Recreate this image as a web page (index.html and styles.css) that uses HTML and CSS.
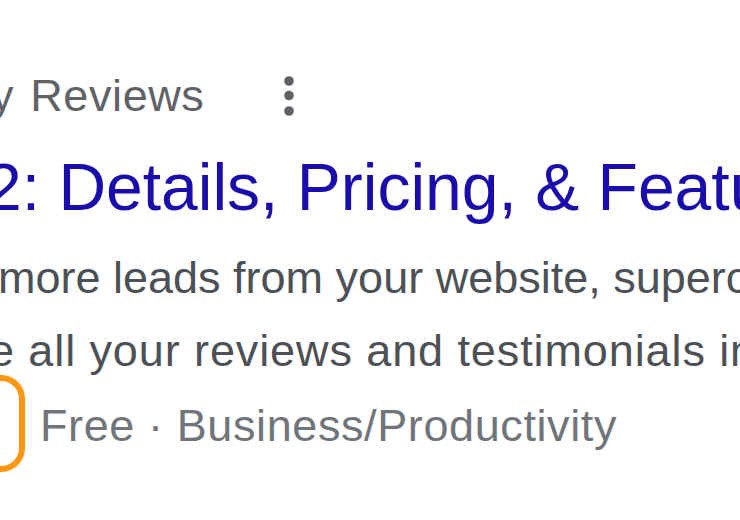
FILE: index.html
```html
<!DOCTYPE html>
<html lang="en">
<head>
<meta charset="utf-8">
<title>Search result</title>
<link rel="stylesheet" href="styles.css">
</head>
<body>
<div class="result">
  <div class="source">
    <span class="crumb"><span class="cut">y</span> Reviews</span>
    <svg class="kebab" width="12" height="42" viewBox="0 0 12 42" aria-hidden="true">
      <circle cx="6" cy="6" r="4.8" fill="#5f6368"/>
      <circle cx="6" cy="20.5" r="4.8" fill="#5f6368"/>
      <circle cx="6" cy="36" r="4.8" fill="#5f6368"/>
    </svg>
  </div>
  <h3 class="title">2: Details, Pricing, &amp; Features</h3>
  <div class="desc">
    <div class="line l1">more leads from your website, supercharge your sales</div>
    <div class="line l2">e all your reviews and testimonials in one place</div>
  </div>
  <div class="meta">
    <div class="mark"></div>
    <span class="meta-text">Free · Business/Productivity</span>
  </div>
</div>
</body>
</html>
```
FILE: styles.css
```css
html, body {
  margin: 0;
  padding: 0;
  background: #ffffff;
  overflow: hidden;
}
body {
  width: 740px;
  height: 520px;
  font-family: Arial, "Liberation Sans", sans-serif;
}
.result {
  padding-top: 66px;
  width: 740px;
  overflow: hidden;
}
.source {
  display: flex;
  align-items: center;
  height: 60px;
  white-space: nowrap;
}
.crumb {
  font-size: 45px;
  line-height: 60px;
  color: #5f6368;
  margin-left: -9px;
  letter-spacing: 0.6px;
}
.cut {
  margin-right: 3px;
}
.kebab {
  display: block;
  margin-left: 79px;
}
.title {
  margin: 21px 0 0 -15px;
  font-weight: normal;
  font-size: 66px;
  line-height: 80px;
  color: #1a0dab;
  white-space: nowrap;
}
.desc {
  margin-top: 14px;
  font-size: 45px;
  line-height: 73px;
  color: #4d5156;
  white-space: nowrap;
}
.l1 {
  margin-left: -2px;
}
.l2 {
  margin-left: -11px;
  letter-spacing: 0.9px;
}
.meta {
  display: flex;
  align-items: center;
  height: 97px;
  margin-top: -12px;
  white-space: nowrap;
}
.mark {
  flex: none;
  width: 85px;
  height: 97px;
  box-sizing: border-box;
  margin-left: -60px;
  border: 6.5px solid #ff960f;
  border-radius: 24px;
}
.meta-text {
  margin-left: 15px;
  padding-top: 4px;
  font-size: 45px;
  line-height: 50px;
  letter-spacing: 0.6px;
  color: #70757a;
}
```
